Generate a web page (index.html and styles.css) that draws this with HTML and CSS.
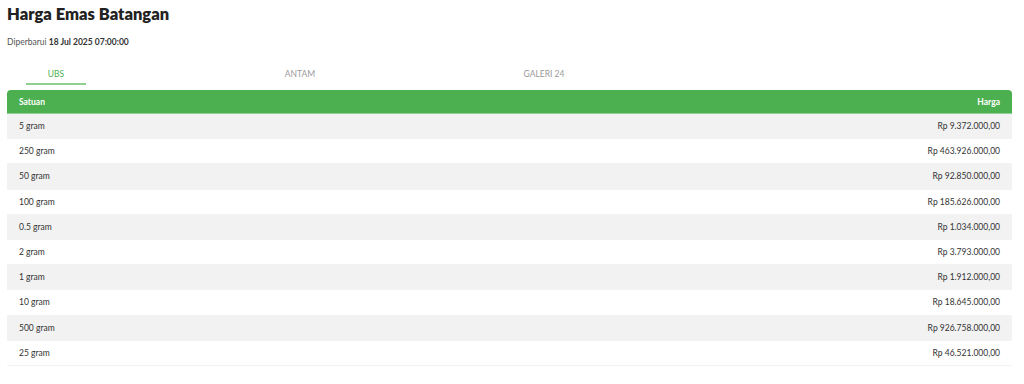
FILE: index.html
```html
<!DOCTYPE html>
<html lang="id">
<head>
<meta charset="utf-8">
<title>Harga Emas Batangan</title>
<link rel="stylesheet" href="styles.css">
</head>
<body>
<div class="page">
  <h1 class="title">Harga Emas Batangan</h1>
  <p class="updated">Diperbarui <b>18 Jul 2025 07:00:00</b></p>
  <nav class="tabs">
    <div class="tab active"><span>UBS</span></div>
    <div class="tab"><span>ANTAM</span></div>
    <div class="tab"><span>GALERI 24</span></div>
  </nav>
  <table class="prices">
    <thead>
      <tr><th class="unit">Satuan</th><th class="price">Harga</th></tr>
    </thead>
    <tbody>
      <tr><td class="unit">5 gram</td><td class="price">Rp 9.372.000,00</td></tr>
      <tr><td class="unit">250 gram</td><td class="price">Rp 463.926.000,00</td></tr>
      <tr><td class="unit">50 gram</td><td class="price">Rp 92.850.000,00</td></tr>
      <tr><td class="unit">100 gram</td><td class="price">Rp 185.626.000,00</td></tr>
      <tr><td class="unit">0.5 gram</td><td class="price">Rp 1.034.000,00</td></tr>
      <tr><td class="unit">2 gram</td><td class="price">Rp 3.793.000,00</td></tr>
      <tr><td class="unit">1 gram</td><td class="price">Rp 1.912.000,00</td></tr>
      <tr><td class="unit">10 gram</td><td class="price">Rp 18.645.000,00</td></tr>
      <tr><td class="unit">500 gram</td><td class="price">Rp 926.758.000,00</td></tr>
      <tr><td class="unit">25 gram</td><td class="price">Rp 46.521.000,00</td></tr>
    </tbody>
  </table>
</div>
</body>
</html>
```
FILE: styles.css
```css
* { box-sizing: border-box; }
html, body { margin: 0; padding: 0; background: #fff; }
body {
  font-family: "Lato", "Noto Sans", "Liberation Sans", sans-serif;
  color: #333;
}
.page {
  padding: 3px 12px 0 7px;
}
.title {
  margin: 0;
  font-size: 16.5px;
  line-height: 22px;
  font-weight: 800;
  color: #222;
}
.updated {
  margin: 11px 0 0;
  font-size: 8.5px;
  line-height: 12px;
  color: #555;
}
.updated b { color: #333; font-weight: 700; }
.tabs {
  display: flex;
  gap: 146px;
  margin-top: 20px;
  height: 18px;
}
.tab {
  width: 98px;
  display: flex;
  justify-content: center;
  font-size: 8.5px;
  color: #9a9a9a;
}
.tab span {
  display: block;
  width: 60px;
  text-align: center;
  line-height: 12px;
  height: 17px;
}
.tab.active span {
  color: #4caf50;
  border-bottom: 2px solid #8fcf92;
}
.prices {
  width: 100%;
  margin-top: 4px;
  border-collapse: separate;
  border-spacing: 0;
  font-size: 8.5px;
}
.prices th {
  background: #4caf50;
  color: #fff;
  font-weight: 700;
  height: 24px;
  padding: 0 12px;
  border-bottom: 1px solid #8fd293;
}
.prices th.unit { text-align: left; border-top-left-radius: 4px; }
.prices th.price { text-align: right; border-top-right-radius: 4px; }
.prices td {
  height: 25.2px;
  padding: 0 12px;
  color: #333;
  border-bottom: 1px solid #f3f3f3;
}
.prices td.unit { text-align: left; }
.prices td.price { text-align: right; }
.prices tbody tr:nth-child(odd) td { background: #f2f2f2; }
```
